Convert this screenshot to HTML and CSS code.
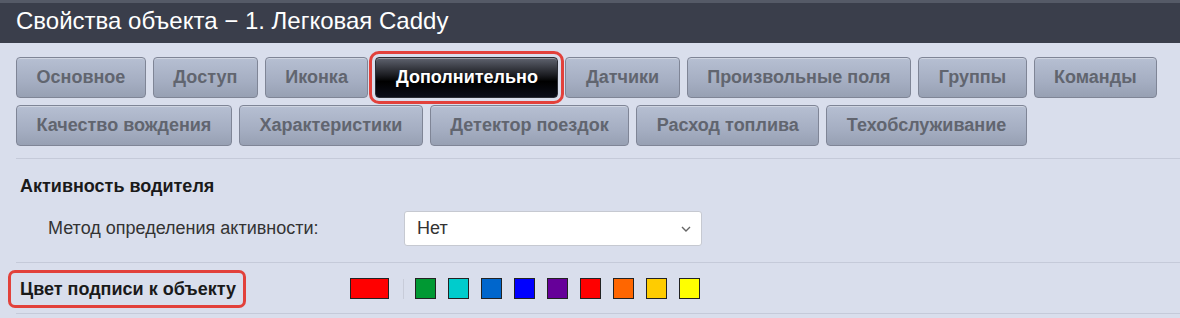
FILE: index.html
```html
<!DOCTYPE html>
<html lang="ru">
<head>
    <meta charset="UTF-8">
    <title>Свойства объекта</title>
    <link rel="stylesheet" href="styles.css">
</head>
<body>
<div class="head">Свойства объекта − 1. Легковая Caddy</div>

<div class="tabs">
    <span class="tab">Основное</span>
    <span class="tab">Доступ</span>
    <span class="tab">Иконка</span>
    <span class="tab active mark">Дополнительно</span>
    <span class="tab">Датчики</span>
    <span class="tab">Произвольные поля</span>
    <span class="tab">Группы</span>
    <span class="tab">Команды</span>
    <span class="tab">Качество вождения</span>
    <span class="tab">Характеристики</span>
    <span class="tab">Детектор поездок</span>
    <span class="tab">Расход топлива</span>
    <span class="tab">Техобслуживание</span>
</div>

<div class="section first">
    <div class="caption">Активность водителя</div>
    <div class="row">
        <div class="label">Метод определения активности:</div>
        <div class="select">
            <span>Нет</span>
            <svg width="12" height="8" viewBox="0 0 12 8"><path d="M2 2 L6 6 L10 2" fill="none" stroke="#666" stroke-width="1.4"/></svg>
        </div>
    </div>
</div>

<div class="section colors">
    <div class="caption-box"><span class="caption mark-label">Цвет подписи к объекту</span></div>
    <div class="sw big" style="background:#ff0000"></div>
    <div class="sep"></div>
    <div class="sw" style="background:#009933"></div>
    <div class="sw" style="background:#00cccc"></div>
    <div class="sw" style="background:#0066cc"></div>
    <div class="sw" style="background:#0000ff"></div>
    <div class="sw" style="background:#660099"></div>
    <div class="sw" style="background:#ff0000"></div>
    <div class="sw" style="background:#ff6600"></div>
    <div class="sw" style="background:#ffcc00"></div>
    <div class="sw" style="background:#ffff00"></div>
</div>
</body>
</html>
```

FILE: styles.css
```css
*{
    margin: 0;
    padding: 0;
    box-sizing: border-box;
}
body{
    background: #d9deec;
    font-family: "Liberation Sans", Arial, sans-serif;
    color: #222;
}
.head{
    height: 43px;
    background: #3a3e4b;
    border-top: 3px solid #555a67;
    color: #fff;
    font-size: 24px;
    line-height: 36px;
    padding-left: 16px;
}
.tabs{
    display: flex;
    flex-wrap: wrap;
    gap: 7px;
    padding: 14px 14px 12px 16px;
    width: 1180px;
}
.tab{
    height: 41px;
    line-height: 39px;
    padding: 0 19.5px;
    font-size: 18px;
    font-weight: bold;
    color: #61656f;
    background: linear-gradient(#b6bfd2, #a5aec2 60%, #97a0b3);
    border: 1px solid #7f8596;
    border-radius: 4px;
    box-shadow: inset 0 1px 0 rgba(255,255,255,0.35);
}
.tab.active{
    color: #fff;
    background: linear-gradient(#5f636f, #1a1b20 45%, #000 60%, #0b0d18);
    border-color: #2a2c33;
}
.mark{
    outline: 3px solid #e2413b;
    outline-offset: 3px;
}
.section{
    margin-left: 16px;
    border-top: 1px solid #c5cad9;
}
.section.first{
    padding: 17px 0 16px 4px;
}
.caption{
    font-size: 18px;
    font-weight: bold;
    line-height: 20px;
    color: #1a1a1a;
}
.row{
    display: flex;
    align-items: center;
    margin-top: 15px;
}
.label{
    width: 384px;
    padding-left: 28px;
    font-size: 18px;
    color: #333;
}
.select{
    width: 298px;
    height: 35px;
    background: #fff;
    border: 1px solid #c6c9d1;
    border-radius: 3px;
    display: flex;
    align-items: center;
    justify-content: space-between;
    padding: 0 9px 0 12px;
    font-size: 18px;
    color: #333;
}
.colors{
    display: flex;
    align-items: center;
    padding: 15px 0 14px 4px;
    border-bottom: 1px solid #c5cad9;
}
.caption-box{
    width: 330px;
}
.mark-label{
    display: inline-block;
    padding: 6px 7px 6px 9px;
    margin: -6px -7px -6px -9px;
    border-radius: 4px;
    outline: 3px solid #e2413b;
}
.sw{
    width: 21px;
    height: 21px;
    border: 1px solid #222;
    margin-right: 12px;
}
.sw.big{
    width: 39px;
    margin-right: 14px;
}
.sep{
    width: 1px;
    height: 20px;
    background: #c8ccd9;
    margin-right: 11px;
}
```
